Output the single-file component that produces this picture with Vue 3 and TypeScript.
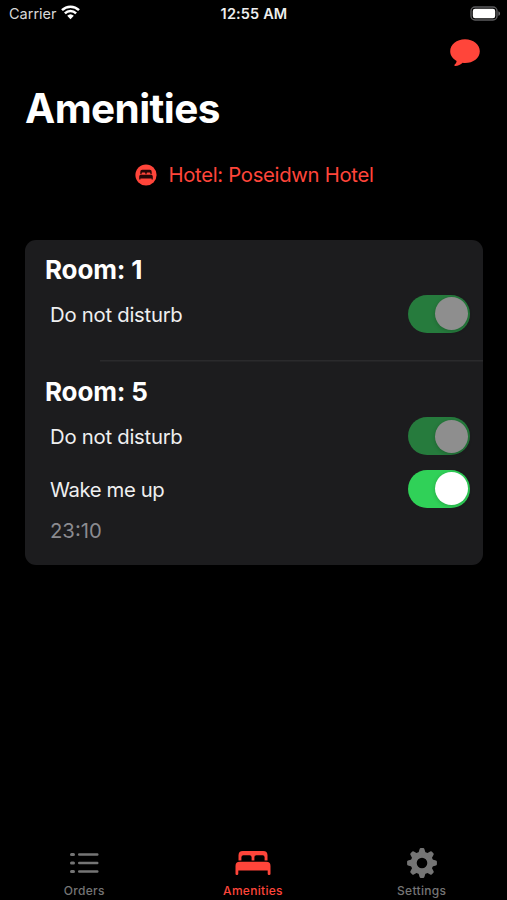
<script setup lang="ts">
import { ref } from 'vue'

interface Amenity {
  label: string
  on: boolean
  locked: boolean
  time?: string
}
interface Room {
  number: number
  amenities: Amenity[]
}

const rooms = ref<Room[]>([
  { number: 1, amenities: [{ label: 'Do not disturb', on: true, locked: true }] },
  {
    number: 5,
    amenities: [
      { label: 'Do not disturb', on: true, locked: true },
      { label: 'Wake me up', on: true, locked: false, time: '23:10' },
    ],
  },
])

const tabs = ['Orders', 'Amenities', 'Settings'] as const
const activeTab = ref<string>('Amenities')

const teeth = [0, 45, 90, 135, 180, 225, 270, 315]

function toggle(item: Amenity) {
  if (!item.locked) item.on = !item.on
}
</script>

<template>
  <div class="screen">
    <header class="status">
      <div class="carrier">
        <span class="carrier-name">Carrier</span>
        <svg class="wifi" width="19" height="15" viewBox="0 0 19 15">
          <path d="M1 5.200a12.200 12.200 0 0 1 17 0M3.900 8.400a8 8 0 0 1 11.200 0" fill="none" stroke="#fff" stroke-width="2.500" />
          <path d="M6.200 10.800a4.800 4.800 0 0 1 6.600 0L9.500 14.200z" fill="#fff" />
        </svg>
      </div>
      <span class="clock">12:55 AM</span>
      <svg class="battery" width="31" height="15" viewBox="0 0 31 15">
        <rect x="1" y="1" width="26" height="13" rx="4" fill="none" stroke="#5b5b5d" stroke-width="1.4" />
        <rect x="2.8" y="2.8" width="22.4" height="9.4" rx="2.2" fill="#fff" />
        <path d="M28.4 5.2c2.2.8 2.2 3.8 0 4.6z" fill="#6b6b6d" />
      </svg>
    </header>

    <nav class="navbar">
      <svg class="bubble" width="30" height="28" viewBox="0 0 30 28">
        <path d="M15 .3C23.3.3 29.8 5.5 29.8 12.2S23.3 24 15 24c-.8 0-1.600-.1-2.300-.2-2 1.700-4.700 3-7.400 3.300-1 .1-1.300-.8-.6-1.500 1.200-1.200 1.800-2.400 1.900-3.700C2.700 19.800.2 16.300.2 12.200.2 5.500 6.700.3 15 .3z" fill="#ff453a" />
      </svg>
    </nav>

    <h1 class="title">Amenities</h1>

    <div class="hotel">
      <svg width="22" height="22" viewBox="0 0 22 22">
        <circle cx="11" cy="11" r="10.6" fill="#ff453a" />
        <path d="M5.300 10.200V7.700q0-1.900 1.900-1.900h7.600q1.900 0 1.900 1.900v2.500h-1.300V9.200q0-.8-.8-.8h-2.100q-.9 0-.9.800v1h-1.200v-1q0-.8-.9-.8H7.400q-.8 0-.8.800v1z" fill="#250706" />
        <path d="M4.200 15.600v-3.100q0-1.700 1.700-1.700h10.200q1.700 0 1.700 1.700v3.100h-1.200v-1.200H5.400v1.200z" fill="#250706" />
      </svg>
      <span class="hotel-name">Hotel: Poseidwn Hotel</span>
    </div>

    <main class="card">
      <section v-for="room in rooms" :key="room.number" class="room">
        <h2>Room: {{ room.number }}</h2>
        <div v-for="item in room.amenities" :key="item.label" class="amenity">
          <div class="row">
            <span class="label" :class="{ timed: item.time }">{{ item.label }}</span>
            <button
              type="button"
              role="switch"
              class="switch"
              :class="{ on: item.on, locked: item.locked }"
              :aria-checked="item.on"
              :aria-label="item.label"
              @click="toggle(item)"
            >
              <span class="knob"></span>
            </button>
          </div>
          <div v-if="item.time" class="time">{{ item.time }}</div>
        </div>
      </section>
    </main>

    <footer class="tabs">
      <button
        v-for="tab in tabs"
        :key="tab"
        type="button"
        class="tab"
        :class="{ active: tab === activeTab }"
        @click="activeTab = tab"
      >
        <svg v-if="tab === 'Orders'" width="30" height="32" viewBox="0 0 30 32">
          <g fill="currentColor">
            <rect x="1" y="6" width="5" height="3" rx="1.500" />
            <rect x="1" y="14.500" width="5" height="3" rx="1.500" />
            <rect x="1" y="23" width="5" height="3" rx="1.500" />
            <rect x="9" y="6.300" width="20.500" height="2.400" rx="1.200" />
            <rect x="9" y="14.800" width="20.500" height="2.400" rx="1.200" />
            <rect x="9" y="23.300" width="20.500" height="2.400" rx="1.200" />
          </g>
        </svg>
        <svg v-else-if="tab === 'Amenities'" width="36" height="32" viewBox="0 0 36 32">
          <g fill="currentColor">
            <path d="M3.500 13.500V8.300q0-4.300 4.300-4.300h20.400q4.300 0 4.300 4.300v5.200h-2.900v-3.300q0-2-2-2h-6.200q-2 0-2 2v3.300h-2.800v-3.300q0-2-2-2H8.400q-2 0-2 2v3.300z" />
            <path d="M.500 26.700v-7.700q0-4.200 4.200-4.200h26.600q4.200 0 4.200 4.200v7.700q0 1.200-1.200 1.200h-.4q-1.200 0-1.200-1.200v-3.200H3.300v3.200q0 1.200-1.200 1.200h-.4q-1.200 0-1.200-1.200z" />
          </g>
        </svg>
        <svg v-else width="32" height="32" viewBox="-16 -16 32 32">
          <circle r="8.300" fill="none" stroke="currentColor" stroke-width="6" />
          <path
            v-for="angle in teeth"
            :key="angle"
            d="M-3.700-9.500-2.400-14q.3-.9 1.200-.9h2.400q.9 0 1.200.9L3.700-9.500z"
            fill="currentColor"
            :transform="`rotate(${angle})`"
          />
        </svg>
        <span class="tab-label">{{ tab }}</span>
      </button>
    </footer>
  </div>
</template>

<style>
body {
  margin: 0;
  background: #000;
}
</style>

<style scoped>
.screen {
  display: flex;
  flex-direction: column;
  box-sizing: border-box;
  height: 900px;
  background: #000;
  color: #fff;
  font-family: Inter, "Liberation Sans", sans-serif;
}
svg {
  display: block;
  flex: none;
}
button {
  border: 0;
  padding: 0;
  background: none;
  font: inherit;
  color: inherit;
}
.status {
  display: grid;
  grid-template-columns: 1fr auto 1fr;
  align-items: center;
  height: 27px;
  padding: 0 6px 0 9px;
  font-size: 14.500px;
}
.carrier {
  display: flex;
  align-items: center;
  gap: 5px;
  color: #d8d8d8;
}
.wifi {
  margin: 0 0 2px -0.500px;
}
.clock {
  margin-right: 2px;
  font-weight: 600;
  letter-spacing: 0.150px;
  color: #eee;
}
.battery {
  justify-self: end;
}
.navbar {
  display: flex;
  justify-content: flex-end;
  box-sizing: border-box;
  height: 53px;
  padding: 11.500px 27px 0 0;
}
.title {
  margin: 0;
  padding-left: 25px;
  font-size: 40.500px;
  font-weight: 700;
  line-height: 58px;
  letter-spacing: -0.580px;
}
.hotel {
  display: flex;
  justify-content: center;
  align-items: center;
  gap: 11px;
  height: 39px;
  margin-top: 17px;
  padding-left: 2px;
  color: #ff453a;
  font-size: 20.300px;
  letter-spacing: -0.300px;
}
.card {
  margin: 45.500px 24.500px 0 25px;
  height: 325.500px;
  border-radius: 11px;
  background: #1c1c1e;
  overflow: hidden;
}
.room {
  box-sizing: border-box;
  height: 120.500px;
  padding: 12px 12.500px 0 20px;
}
.room + .room {
  height: 205px;
  padding-top: 14px;
  background: linear-gradient(#2a2a2c, #2a2a2c) 75px 0 / 100% 1.500px no-repeat;
}
h2 {
  margin: 0;
  font-size: 26px;
  font-weight: 700;
  line-height: 36px;
  letter-spacing: -0.150px;
}
.row {
  display: flex;
  align-items: center;
  justify-content: space-between;
  height: 52.500px;
  padding-left: 5px;
}
.label,
.time {
  font-size: 20.300px;
  letter-spacing: -0.250px;
  color: #efeff0;
}
.label {
  padding-top: 1px;
}
.label.timed {
  letter-spacing: -0.400px;
}
.time {
  height: 31px;
  padding-left: 5px;
  line-height: 31px;
  letter-spacing: 0;
  color: #8b8b90;
}
.switch {
  display: flex;
  align-items: center;
  box-sizing: border-box;
  width: 62.500px;
  height: 38px;
  padding: 0 2.500px;
  border-radius: 19px;
  background: #39393d;
}
.switch.on {
  justify-content: flex-end;
  background: #30d158;
}
.switch.locked {
  background: #267b3d;
}
.knob {
  width: 33px;
  height: 33px;
  border-radius: 50%;
  background: #fff;
  box-shadow: 0 1px 4px rgba(0, 0, 0, 0.2);
}
.locked .knob {
  background: #8e8e8e;
}
.tabs {
  display: grid;
  grid-template-columns: repeat(3, 1fr);
  margin-top: auto;
  padding-right: 1px;
  height: 53px;
}
.tab {
  display: flex;
  flex-direction: column;
  align-items: center;
  color: #757575;
}
.tab.active {
  color: #ff453a;
}
.tab-label {
  margin-top: 5px;
  font-size: 12px;
  font-weight: 500;
  line-height: 14px;
  letter-spacing: 0.300px;
}
</style>
